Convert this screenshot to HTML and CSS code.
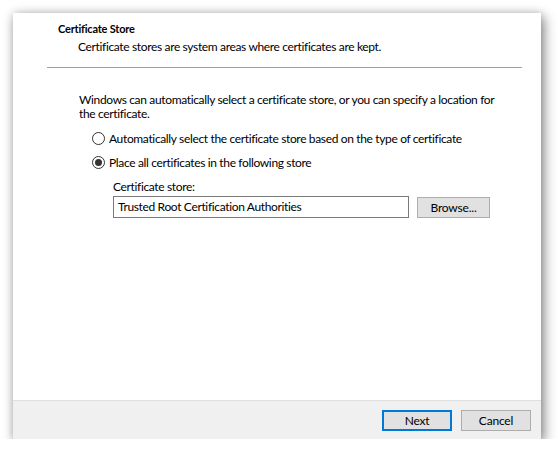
FILE: index.html
```html
<!DOCTYPE html>
<html>
<head>
<meta charset="utf-8">
<link rel="stylesheet" href="styles.css">
</head>
<body>
<div class="dialog">
  <div class="main">
    <div class="header">
      <div class="title">Certificate Store</div>
      <div class="subtitle">Certificate stores are system areas where certificates are kept.</div>
    </div>
    <div class="sep"></div>
    <div class="body">
      <p class="intro">Windows can automatically select a certificate store, or you can specify a location for<br>the certificate.</p>
      <label class="radio first"><span class="dot"></span>Automatically select the certificate store based on the type of certificate</label>
      <label class="radio"><span class="dot checked"></span>Place all certificates in the following store</label>
      <div class="store">
        <div class="store-label">Certificate store:</div>
        <div class="store-row">
          <div class="input">Trusted Root Certification Authorities</div>
          <button class="btn browse">Browse...</button>
        </div>
      </div>
    </div>
  </div>
  <div class="footer">
    <button class="btn primary">Next</button>
    <button class="btn">Cancel</button>
  </div>
</div>
</body>
</html>
```
FILE: styles.css
```css
html, body {
  margin: 0;
  padding: 0;
  background: #ffffff;
}
body {
  font-family: "Lato", "Noto Sans", sans-serif;
  font-size: 12px;
  letter-spacing: -0.35px;
  color: #000;
}
.dialog {
  margin: 13px 0 0 13px;
  width: 528px;
  height: 426px;
  background: #fff;
  display: flex;
  flex-direction: column;
  box-shadow: 3px 4px 12px rgba(0,0,0,0.45), 0 0 8px rgba(0,0,0,0.15);
}
.main {
  flex: 1;
}
.header {
  padding: 8px 0 0 45px;
}
.title {
  font-weight: bold;
  font-size: 11px;
  line-height: 15px;
  letter-spacing: -0.2px;
}
.subtitle {
  margin: 3px 0 0 20px;
  line-height: 15px;
}
.sep {
  margin: 13px 19px 0 34px;
  height: 1px;
  background: #a0a0a0;
}
.body {
  padding: 25px 0 0 66px;
}
.intro {
  margin: 0;
  line-height: 14px;
  white-space: nowrap;
}
.radio {
  display: flex;
  align-items: center;
  height: 15px;
  line-height: 15px;
  margin-left: 13px;
  margin-top: 9px;
}
.radio.first {
  margin-top: 10px;
}
.dot {
  width: 11px;
  height: 11px;
  border: 1px solid #333;
  border-radius: 50%;
  margin-right: 4px;
  position: relative;
  flex: none;
}
.dot.checked::after {
  content: "";
  position: absolute;
  left: 2px;
  top: 2px;
  width: 7px;
  height: 7px;
  border-radius: 50%;
  background: #333;
}
.store {
  margin: 9px 0 0 34px;
}
.store-label {
  line-height: 15px;
}
.store-row {
  display: flex;
  align-items: center;
  margin-top: 2px;
}
.input {
  width: 290px;
  height: 20px;
  border: 1px solid #7a7a7a;
  padding-left: 4px;
  line-height: 19px;
  box-sizing: content-box;
}
.btn {
  font-family: inherit;
  font-size: 12px;
  letter-spacing: -0.2px;
  background: #e1e1e1;
  border: 1px solid #adadad;
  color: #000;
  padding: 0;
  margin: 0;
  height: 21px;
  box-sizing: border-box;
}
.browse {
  width: 73px;
  margin-left: 8px;
}
.footer {
  height: 39px;
  background: #f0f0f0;
  border-top: 1px solid #dfdfdf;
  box-sizing: border-box;
  display: flex;
  justify-content: flex-end;
  align-items: center;
  padding-right: 10px;
  gap: 9px;
}
.footer .btn {
  width: 70px;
  height: 21px;
}
.footer .btn.primary {
  border: 2px solid #0078d7;
}
```
